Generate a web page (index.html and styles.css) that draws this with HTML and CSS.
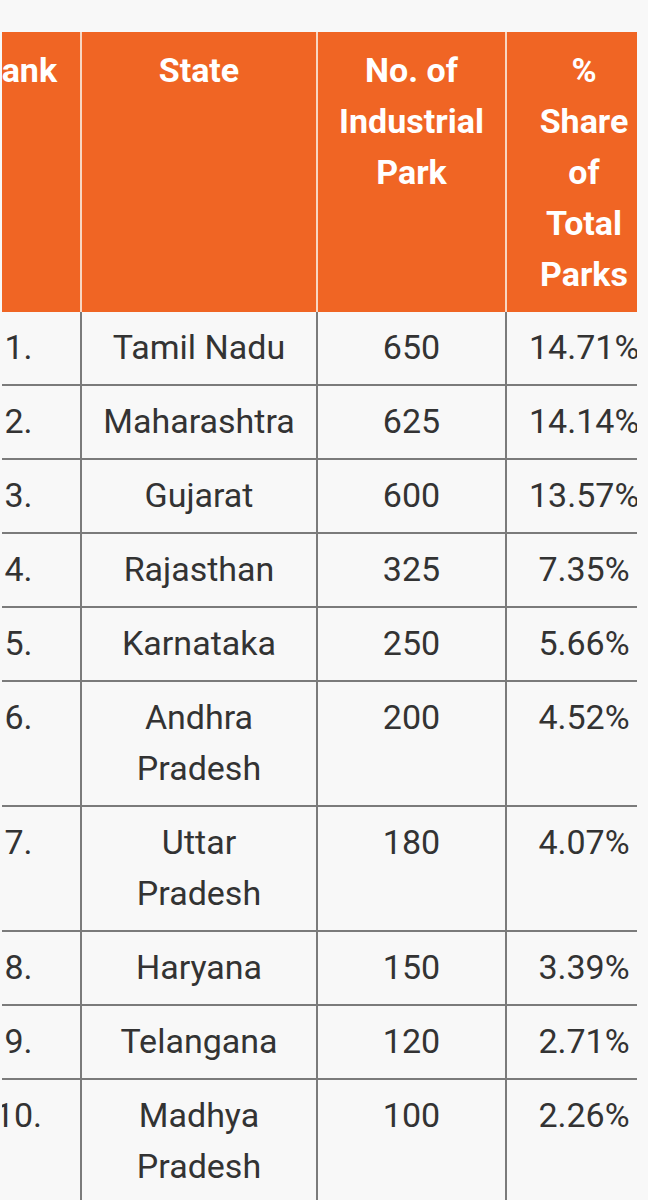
FILE: index.html
```html
<!DOCTYPE html>
<html lang="en">
<head>
<meta charset="utf-8">
<title>Industrial Parks by State</title>
<link rel="stylesheet" href="styles.css">
</head>
<body>
<div class="table-scroll">
  <table class="parks">
    <colgroup>
      <col class="c-rank">
      <col class="c-state">
      <col class="c-num">
      <col class="c-share">
    </colgroup>
    <thead>
      <tr>
        <th>Rank</th>
        <th class="state">State</th>
        <th>No. of Industrial Park</th>
        <th class="share">% Share of Total Parks</th>
      </tr>
    </thead>
    <tbody>
      <tr><td>1.</td><td class="state">Tamil Nadu</td><td>650</td><td class="share">14.71%</td></tr>
      <tr><td>2.</td><td class="state">Maharashtra</td><td>625</td><td class="share">14.14%</td></tr>
      <tr><td>3.</td><td class="state">Gujarat</td><td>600</td><td class="share">13.57%</td></tr>
      <tr><td>4.</td><td class="state">Rajasthan</td><td>325</td><td class="share">7.35%</td></tr>
      <tr><td>5.</td><td class="state">Karnataka</td><td>250</td><td class="share">5.66%</td></tr>
      <tr><td>6.</td><td class="state">Andhra Pradesh</td><td>200</td><td class="share">4.52%</td></tr>
      <tr><td>7.</td><td class="state">Uttar Pradesh</td><td>180</td><td class="share">4.07%</td></tr>
      <tr><td>8.</td><td class="state">Haryana</td><td>150</td><td class="share">3.39%</td></tr>
      <tr><td>9.</td><td class="state">Telangana</td><td>120</td><td class="share">2.71%</td></tr>
      <tr><td>10.</td><td class="state">Madhya Pradesh</td><td>100</td><td class="share">2.26%</td></tr>
    </tbody>
  </table>
</div>
</body>
</html>
```

FILE: styles.css
```css
html, body {
  margin: 0;
  padding: 0;
  background: #f8f8f8;
}

body {
  font-family: Roboto, "Liberation Sans", sans-serif;
  color: #333333;
}

.table-scroll {
  margin: 32px 11px 0 2px;
  overflow: hidden;
}

.parks {
  margin-left: -45px;
  width: 706px;
  table-layout: fixed;
  border-collapse: separate;
  border-spacing: 0;
  font-size: 34px;
  line-height: 51px;
}

.c-rank { width: 125px; }
.c-state { width: 236px; }
.c-num { width: 189px; }
.c-share { width: 156px; }

.parks th {
  background: #f06524;
  color: #ffffff;
  font-weight: 700;
  text-align: center;
  vertical-align: top;
  padding: 13px 12px 12px 12px;
  border-right: 2px solid #f8d6c2;
}

.parks th:last-child {
  border-right: none;
}

.parks td {
  text-align: center;
  vertical-align: top;
  padding: 10px 12px 11px 12px;
  border-right: 2px solid #7b7b7b;
  border-bottom: 2px solid #7b7b7b;
}

.parks td:last-child {
  border-right: none;
}

.parks .state {
  padding-left: 18px;
  padding-right: 18px;
}

.parks .share {
  padding-left: 22px;
  padding-right: 24px;
}
```
